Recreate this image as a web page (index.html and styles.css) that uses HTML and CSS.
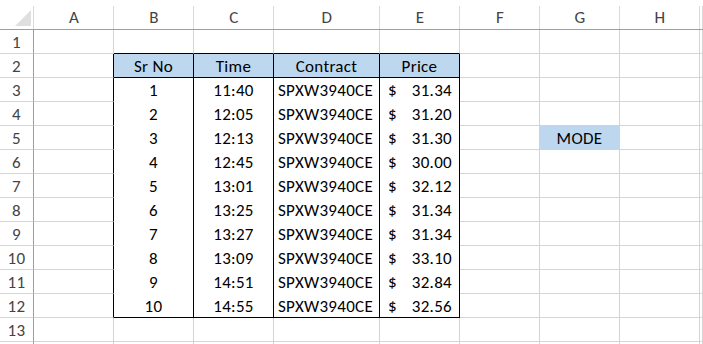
FILE: index.html
```html
<!DOCTYPE html>
<html>
<head>
<meta charset="utf-8">
<link rel="stylesheet" href="styles.css">
</head>
<body>
<div class="sheet">
  <div class="ch corner"><span class="tri"></span></div>
  <div class="ch">A</div><div class="ch">B</div><div class="ch">C</div><div class="ch">D</div><div class="ch">E</div><div class="ch">F</div><div class="ch">G</div><div class="ch">H</div><div class="ch"></div>

  <div class="rh">1</div>
  <div class="c"></div><div class="c bt"></div><div class="c bt"></div><div class="c bt"></div><div class="c bt"></div><div class="c"></div><div class="c"></div><div class="c"></div><div class="c"></div>

  <div class="rh">2</div>
  <div class="c bl"></div><div class="c th">Sr No</div><div class="c th">Time</div><div class="c th">Contract</div><div class="c th">Price</div><div class="c"></div><div class="c"></div><div class="c"></div><div class="c"></div>

  <div class="rh">3</div>
  <div class="c bl"></div><div class="c td ctr">1</div><div class="c td ctr">11:40</div><div class="c td lft">SPXW3940CE</div><div class="c td acc"><span>$</span><span>31.34</span></div><div class="c"></div><div class="c"></div><div class="c"></div><div class="c"></div>

  <div class="rh">4</div>
  <div class="c bl"></div><div class="c td ctr">2</div><div class="c td ctr">12:05</div><div class="c td lft">SPXW3940CE</div><div class="c td acc"><span>$</span><span>31.20</span></div><div class="c"></div><div class="c mode-above"></div><div class="c"></div><div class="c"></div>

  <div class="rh">5</div>
  <div class="c bl"></div><div class="c td ctr">3</div><div class="c td ctr">12:13</div><div class="c td lft">SPXW3940CE</div><div class="c td acc"><span>$</span><span>31.30</span></div><div class="c mode-left"></div><div class="c mode ctr">MODE</div><div class="c"></div><div class="c"></div>

  <div class="rh">6</div>
  <div class="c bl"></div><div class="c td ctr">4</div><div class="c td ctr">12:45</div><div class="c td lft">SPXW3940CE</div><div class="c td acc"><span>$</span><span>30.00</span></div><div class="c"></div><div class="c"></div><div class="c"></div><div class="c"></div>

  <div class="rh">7</div>
  <div class="c bl"></div><div class="c td ctr">5</div><div class="c td ctr">13:01</div><div class="c td lft">SPXW3940CE</div><div class="c td acc"><span>$</span><span>32.12</span></div><div class="c"></div><div class="c"></div><div class="c"></div><div class="c"></div>

  <div class="rh">8</div>
  <div class="c bl"></div><div class="c td ctr">6</div><div class="c td ctr">13:25</div><div class="c td lft">SPXW3940CE</div><div class="c td acc"><span>$</span><span>31.34</span></div><div class="c"></div><div class="c"></div><div class="c"></div><div class="c"></div>

  <div class="rh">9</div>
  <div class="c bl"></div><div class="c td ctr">7</div><div class="c td ctr">13:27</div><div class="c td lft">SPXW3940CE</div><div class="c td acc"><span>$</span><span>31.34</span></div><div class="c"></div><div class="c"></div><div class="c"></div><div class="c"></div>

  <div class="rh">10</div>
  <div class="c bl"></div><div class="c td ctr">8</div><div class="c td ctr">13:09</div><div class="c td lft">SPXW3940CE</div><div class="c td acc"><span>$</span><span>33.10</span></div><div class="c"></div><div class="c"></div><div class="c"></div><div class="c"></div>

  <div class="rh">11</div>
  <div class="c bl"></div><div class="c td ctr">9</div><div class="c td ctr">14:51</div><div class="c td lft">SPXW3940CE</div><div class="c td acc"><span>$</span><span>32.84</span></div><div class="c"></div><div class="c"></div><div class="c"></div><div class="c"></div>

  <div class="rh">12</div>
  <div class="c bl"></div><div class="c td last ctr">10</div><div class="c td last ctr">14:55</div><div class="c td last lft">SPXW3940CE</div><div class="c td last acc"><span>$</span><span>32.56</span></div><div class="c"></div><div class="c"></div><div class="c"></div><div class="c"></div>

  <div class="rh">13</div>
  <div class="c"></div><div class="c"></div><div class="c"></div><div class="c"></div><div class="c"></div><div class="c"></div><div class="c"></div><div class="c"></div><div class="c"></div>

  <div class="rh"></div>
  <div class="c"></div><div class="c"></div><div class="c"></div><div class="c"></div><div class="c"></div><div class="c"></div><div class="c"></div><div class="c"></div><div class="c"></div>
</div>
</body>
</html>
```

FILE: styles.css
```css
html, body {
  margin: 0;
  padding: 0;
  background: #fff;
  overflow: hidden;
}

.sheet {
  display: grid;
  grid-template-columns: 34px 80px 80px 80px 106px 80px 80px 80px 80px 3px;
  grid-template-rows: 30px repeat(13, 24px) 2px;
  font-family: "Carlito", "Lato", "Liberation Sans", sans-serif;
  font-size: 17px;
  letter-spacing: 0.3px;
  color: #000;
  width: 703px;
  height: 344px;
  overflow: hidden;
}

.sheet > div {
  box-sizing: border-box;
  display: flex;
  align-items: flex-end;
  line-height: 1;
  white-space: nowrap;
  min-height: 0;
  overflow: hidden;
}

.ch {
  justify-content: center;
  padding-bottom: 3px;
  color: #444;
  border-bottom: 1px solid #9e9e9e;
  background: linear-gradient(#dadada, #dadada) right bottom / 1px 23px no-repeat;
}

.corner {
  position: relative;
}

.corner .tri {
  position: absolute;
  left: 15px;
  top: 10px;
  width: 16px;
  height: 16px;
  background: #dfdfdf;
  clip-path: polygon(100% 0, 100% 100%, 0 100%);
}

.rh {
  justify-content: center;
  padding-bottom: 2px;
  color: #444;
  border-right: 1px solid #9e9e9e;
  border-bottom: 1px solid #d4d4d4;
}

.c {
  border-right: 1px solid #d4d4d4;
  border-bottom: 1px solid #d4d4d4;
  padding-bottom: 2px;
}

.bt { border-bottom-color: #000; }
.bl { border-right-color: #000; }

.th {
  background: #bdd7ee;
  border-right-color: #000;
  border-bottom-color: #000;
  justify-content: center;
}

.td {
  background: #fff;
  border-right-color: #000;
  border-bottom: 0;
  padding-bottom: 3px;
}

.td.last {
  border-bottom: 1px solid #000;
  padding-bottom: 2px;
}

.ctr { justify-content: center; }
.lft { padding-left: 4px; }

.acc {
  justify-content: space-between;
  padding-left: 8px;
  padding-right: 7px;
}

.mode {
  background: #bdd7ee;
  border-right-color: #bdd7ee;
  border-bottom-color: #bdd7ee;
}
.mode-above { border-bottom-color: #bdd7ee; }
.mode-left { border-right-color: #bdd7ee; }
```
